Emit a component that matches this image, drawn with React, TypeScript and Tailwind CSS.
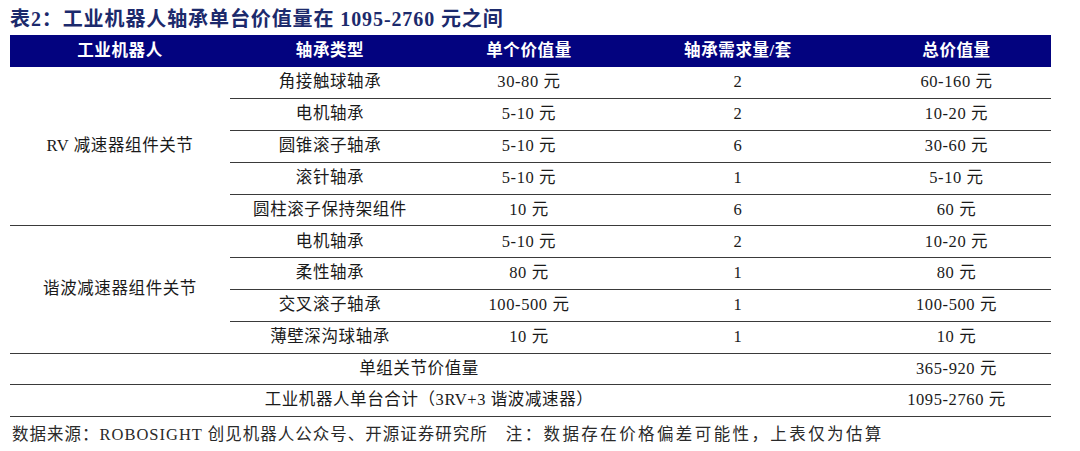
const FONT = '"Liberation Serif", "Noto Sans CJK SC", serif';

type Row = { type: string; unit: string; qty: string; total: string };

const rv: Row[] = [
  { type: '角接触球轴承', unit: '30-80 元', qty: '2', total: '60-160 元' },
  { type: '电机轴承', unit: '5-10 元', qty: '2', total: '10-20 元' },
  { type: '圆锥滚子轴承', unit: '5-10 元', qty: '6', total: '30-60 元' },
  { type: '滚针轴承', unit: '5-10 元', qty: '1', total: '5-10 元' },
  { type: '圆柱滚子保持架组件', unit: '10 元', qty: '6', total: '60 元' },
];

const harmonic: Row[] = [
  { type: '电机轴承', unit: '5-10 元', qty: '2', total: '10-20 元' },
  { type: '柔性轴承', unit: '80 元', qty: '1', total: '80 元' },
  { type: '交叉滚子轴承', unit: '100-500 元', qty: '1', total: '100-500 元' },
  { type: '薄壁深沟球轴承', unit: '10 元', qty: '1', total: '10 元' },
];

const cell = 'h-[31.8px] p-0 text-center align-middle border-b-[1.5px] border-[#3a3a3a]';
// last column sits a little right of its box centre
const last = cell + ' pl-[14px]';

function Group({ name, rows }: { name: string; rows: Row[] }) {
  return (
    <>
      {rows.map((r, i) => (
        <tr key={r.type + i}>
          {i === 0 && (
            <td rowSpan={rows.length} className={cell}>
              {name}
            </td>
          )}
          <td className={cell}>{r.type}</td>
          <td className={cell}>{r.unit}</td>
          <td className={cell}>{r.qty}</td>
          <td className={last}>{r.total}</td>
        </tr>
      ))}
    </>
  );
}

export default function App() {
  return (
    <div className="w-[1080px] h-[451px] bg-white overflow-hidden" style={{ fontFamily: FONT }}>
      <div className="pl-[10px] pt-[6px]">
        <h1 className="text-[20px] leading-[26px] font-bold text-[#1c2a6c] tracking-[0.9px]">
          表2：工业机器人轴承单台价值量在 1095-2760 元之间
        </h1>
        <table className="mt-[3px] w-[1041px] border-collapse table-fixed text-[16.5px] text-[#1a1a1a] tracking-[0.6px]">
          <colgroup>
            <col className="w-[220px]" />
            <col className="w-[200px]" />
            <col className="w-[198px]" />
            <col className="w-[220px]" />
            <col className="w-[203px]" />
          </colgroup>
          <thead>
            <tr className="bg-[#03037f] text-white font-bold">
              <th className="h-[32px] p-0 font-bold">工业机器人</th>
              <th className="h-[32px] p-0 font-bold">轴承类型</th>
              <th className="h-[32px] p-0 font-bold">单个价值量</th>
              <th className="h-[32px] p-0 font-bold">轴承需求量/套</th>
              <th className="h-[32px] p-0 pl-[14px] font-bold">总价值量</th>
            </tr>
          </thead>
          <tbody>
            <Group name="RV 减速器组件关节" rows={rv} />
            <Group name="谐波减速器组件关节" rows={harmonic} />
            <tr>
              <td colSpan={4} className={cell + ' pr-[20px]'}>单组关节价值量</td>
              <td className={last}>365-920 元</td>
            </tr>
            <tr>
              <td colSpan={4} className={cell}>工业机器人单台合计（3RV+3 谐波减速器）</td>
              <td className={last}>1095-2760 元</td>
            </tr>
          </tbody>
        </table>
        <p className="mt-[7px] pl-[2px] text-[16.5px] leading-[22px] text-[#2a2a2a] tracking-[1px]">
          <span>数据来源：ROBOSIGHT 创见机器人公众号、开源证券研究所</span>
          <span className="ml-[18px] tracking-[2.4px]">注：数据存在价格偏差可能性，上表仅为估算</span>
        </p>
      </div>
    </div>
  );
}
